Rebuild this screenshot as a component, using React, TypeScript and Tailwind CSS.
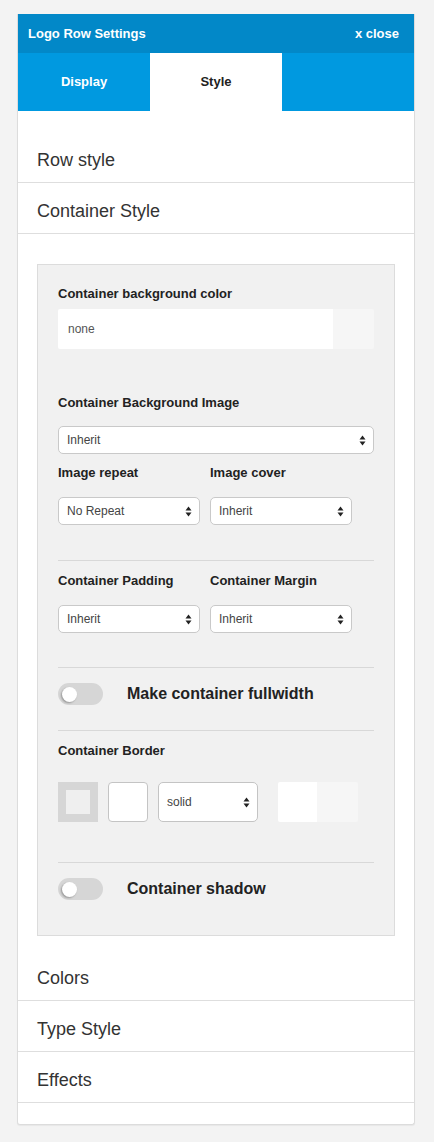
import React from "react"

const font = {fontFamily: '"Liberation Sans", Arial, Helvetica, sans-serif'}

function Arrows() {
    return <svg width="7" height="11" viewBox="0 0 7 11" className="shrink-0">
        <path d="M3.5 0.5 L6.5 4.5 L0.5 4.5 Z" fill="#222"/>
        <path d="M3.5 10.5 L6.5 6.5 L0.5 6.5 Z" fill="#222"/>
    </svg>
}

function Select({value, className}: { value: string, className: string }) {
    return <div
        className={"h-[28px] bg-white border border-[#c9c9c9] rounded-[5px] flex items-center justify-between pl-[8px] pr-[7px] text-[12px] text-[#444] " + className}>
        <span>{value}</span>
        <Arrows/>
    </div>
}

function Label({children}: { children: React.ReactNode }) {
    return <div className="text-[13px] leading-[16px] font-bold text-[#222]">{children}</div>
}

function Toggle({label}: { label: string }) {
    return <div className="flex items-center h-[22px]">
        <div className="w-[45px] h-[22px] rounded-full bg-[#d6d6d6] flex items-center pl-[4px]">
            <div className="w-[15px] h-[15px] rounded-full bg-white shadow-[-1px_1px_2px_rgba(0,0,0,0.3)]"/>
        </div>
        <div className="ml-[24px] text-[16px] leading-[22px] font-bold text-[#222]">{label}</div>
    </div>
}

function Divider({className}: { className: string }) {
    return <div className={"h-px bg-[#d8d8d8] " + className}/>
}

function Row({title}: { title: string }) {
    return <div className="h-[51px] border-b border-[#dedede] pl-[19px] pt-[18px] text-[18px] leading-[21px] text-[#333]">
        {title}
    </div>
}

export default function App() {
    return <div className="min-h-[1142px] bg-[#f3f3f3] pt-[14px] px-[17px] pb-[19px]" style={font}>
        <div className="w-[398px] bg-white border border-t-0 border-[#dcdcdc] rounded-b-[3px] shadow-[0_1px_1px_rgba(0,0,0,0.05)]">
            <div className="h-[39px] bg-[#0288c8] flex items-center justify-between px-[10px] text-white font-bold text-[13px]">
                <span>Logo Row Settings</span>
                <span className="mr-[5px]">x close</span>
            </div>
            <div className="h-[58px] bg-[#0099e0] flex text-[13px] font-bold">
                <div className="w-[132px] flex items-center justify-center text-white">Display</div>
                <div className="w-[132px] flex items-center justify-center bg-white text-[#222]">Style</div>
                <div className="flex-1"/>
            </div>

            <div className="pt-[21px]">
                <Row title="Row style"/>
                <Row title="Container Style"/>

                <div className="pt-[30px] px-[19px] pb-[14px]">
                    <div className="bg-[#f1f1f1] border border-[#dcdcdc] pt-[21px] px-[20px] pb-[35px]">
                        <Label>Container background color</Label>
                        <div className="mt-[7px] h-[40px] flex rounded-[2px] overflow-hidden">
                            <div className="flex-1 bg-white flex items-center pl-[10px] text-[12px] text-[#555]">none</div>
                            <div className="w-[41px] bg-[#f6f6f6]"/>
                        </div>

                        <div className="mt-[46px]"><Label>Container Background Image</Label></div>
                        <Select value="Inherit" className="mt-[15px]"/>

                        <div className="mt-[11px] flex gap-[10px]">
                            <div className="w-[142px]">
                                <Label>Image repeat</Label>
                                <Select value="No Repeat" className="mt-[16px]"/>
                            </div>
                            <div className="w-[142px]">
                                <Label>Image cover</Label>
                                <Select value="Inherit" className="mt-[16px]"/>
                            </div>
                        </div>

                        <Divider className="mt-[35px]"/>

                        <div className="mt-[12px] flex gap-[10px]">
                            <div className="w-[142px]">
                                <Label>Container Padding</Label>
                                <Select value="Inherit" className="mt-[16px]"/>
                            </div>
                            <div className="w-[142px]">
                                <Label>Container Margin</Label>
                                <Select value="Inherit" className="mt-[16px]"/>
                            </div>
                        </div>

                        <Divider className="mt-[34px]"/>
                        <div className="mt-[15px]"><Toggle label="Make container fullwidth"/></div>
                        <Divider className="mt-[25px]"/>

                        <div className="mt-[12px]"><Label>Container Border</Label></div>
                        <div className="mt-[23px] flex items-center">
                            <div className="w-[40px] h-[40px] bg-[#d6d6d6] flex items-center justify-center">
                                <div className="w-[24px] h-[24px] bg-[#efefef]"/>
                            </div>
                            <div className="ml-[10px] w-[40px] h-[40px] bg-white border border-[#c4c4c4] rounded-[4px]"/>
                            <div
                                className="ml-[10px] w-[100px] h-[40px] bg-white border border-[#c4c4c4] rounded-[5px] flex items-center justify-between pl-[8px] pr-[7px] text-[12px] text-[#444]">
                                <span>solid</span>
                                <Arrows/>
                            </div>
                            <div className="ml-[20px] w-[80px] h-[40px] flex rounded-[2px] overflow-hidden">
                                <div className="w-[39px] bg-white"/>
                                <div className="flex-1 bg-[#f6f6f6]"/>
                            </div>
                        </div>

                        <Divider className="mt-[40px]"/>
                        <div className="mt-[15px]"><Toggle label="Container shadow"/></div>
                    </div>
                </div>

                <Row title="Colors"/>
                <Row title="Type Style"/>
                <Row title="Effects"/>
                <div className="h-[21px]"/>
            </div>
        </div>
    </div>
}
